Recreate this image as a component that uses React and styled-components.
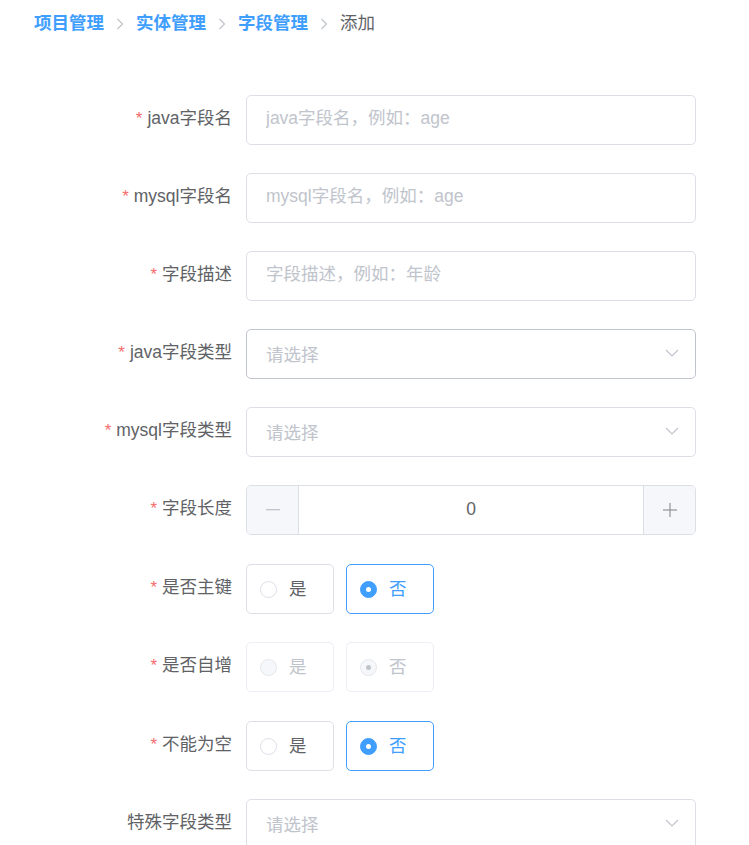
import React from "react";
import styled, { createGlobalStyle, css } from "styled-components";

const Global = createGlobalStyle`
  html, body { margin: 0; padding: 0; background: #fff; }
  body {
    font-family: "Helvetica Neue", Helvetica, "Liberation Sans", Arial, "Noto Sans CJK SC", sans-serif;
    -webkit-font-smoothing: antialiased;
  }
  * { box-sizing: border-box; }
`;

const Page = styled.div`
  width: 749px;
  min-height: 845px;
  overflow: hidden;
`;

const Breadcrumb = styled.nav`
  display: flex;
  align-items: center;
  padding: 14px 34px 0;
  height: 32px;
  font-size: 17.5px;
  line-height: 18px;
`;

const Crumb = styled.span`
  color: ${(p) => (p.$last ? "#606266" : "#409EFF")};
  font-weight: ${(p) => (p.$last ? 400 : 700)};
  white-space: nowrap;
`;

const Sep = styled.svg`
  width: 8px;
  height: 12px;
  margin: 1px 12px 0 12px;
  flex: none;
`;

const Form = styled.form`
  padding: 63px 0 0 96px;
`;

const Item = styled.div`
  display: flex;
  align-items: flex-start;
  margin-bottom: ${(p) => p.$mb || 28}px;
`;

const Label = styled.label`
  width: 150px;
  flex: none;
  padding-right: 14px;
  text-align: right;
  line-height: 47px;
  height: 50px;
  font-size: 17.5px;
  color: #606266;
  white-space: nowrap;
`;

const Star = styled.span`
  color: #F56C6C;
  margin-right: 5px;
  font-size: 17px;
`;

const Control = styled.div`
  width: 450px;
  height: 50px;
`;

const TextInput = styled.input`
  width: 100%;
  height: 50px;
  border: 1px solid #DCDFE6;
  border-radius: 5px;
  padding: 0 19px 3px;
  font: inherit;
  font-size: 17.5px;
  color: #606266;
  outline: none;
  background: #fff;
  &::placeholder { color: #C0C4CC; }
`;

const SelectBox = styled.div`
  display: flex;
  align-items: center;
  justify-content: space-between;
  height: 50px;
  border: 1px solid ${(p) => (p.$hover ? "#C0C4CC" : "#DCDFE6")};
  border-radius: 5px;
  padding: 0 16px 2px 19px;
  font-size: 17.5px;
  color: #C0C4CC;
  background: #fff;
`;

const Arrow = styled.svg`
  width: 14px;
  height: 8px;
  margin-top: 0px;
`;

const NumberBox = styled.div`
  display: flex;
  height: 50px;
  border: 1px solid #DCDFE6;
  border-radius: 5px;
  overflow: hidden;
  background: #fff;
`;

const StepBtn = styled.div`
  width: 52px;
  flex: none;
  display: flex;
  align-items: center;
  justify-content: center;
  background: #F5F7FA;
  ${(p) =>
    p.$side === "left"
      ? css`border-right: 1px solid #DCDFE6;`
      : css`border-left: 1px solid #DCDFE6;`}
`;

const NumValue = styled.div`
  flex: 1;
  display: flex;
  align-items: center;
  justify-content: center;
  padding-bottom: 2px;
  font-size: 17.5px;
  color: #606266;
`;

const RadioGroup = styled.div`
  display: flex;
  gap: 12px;
`;

const RadioBox = styled.div`
  width: 88px;
  height: 50px;
  display: flex;
  align-items: center;
  padding-left: 13px;
  border-radius: 5px;
  border: 1px solid
    ${(p) => (p.$disabled ? "#EBEEF5" : p.$checked ? "#409EFF" : "#DCDFE6")};
  background: #fff;
`;

const Circle = styled.span`
  width: 17px;
  height: 17px;
  border-radius: 50%;
  flex: none;
  display: flex;
  align-items: center;
  justify-content: center;
  border: 1px solid
    ${(p) => (p.$disabled ? "#E4E7ED" : p.$checked ? "#409EFF" : "#DCDFE6")};
  background: ${(p) =>
    p.$disabled ? "#F5F7FA" : p.$checked ? "#409EFF" : "#fff"};
  &::after {
    content: "";
    display: ${(p) => (p.$checked ? "block" : "none")};
    width: 5px;
    height: 5px;
    border-radius: 50%;
    background: ${(p) => (p.$disabled ? "#C0C4CC" : "#fff")};
  }
`;

const RadioText = styled.span`
  margin-left: 12px;
  margin-top: -3px;
  font-size: 17.5px;
  color: ${(p) =>
    p.$disabled ? "#C0C4CC" : p.$checked ? "#409EFF" : "#606266"};
`;

const Chevron = () => (
  <Sep viewBox="0 0 8 12">
    <path d="M1.5 1 L6.5 6 L1.5 11" fill="none" stroke="#C0C4CC" strokeWidth="1.2" />
  </Sep>
);

const Select = ({ hover }) => (
  <SelectBox $hover={hover}>
    <span>请选择</span>
    <Arrow viewBox="0 0 14 8">
      <path d="M1 1 L7 7 L13 1" fill="none" stroke="#C0C4CC" strokeWidth="1.1" />
    </Arrow>
  </SelectBox>
);

const Radio = ({ checked, disabled, children }) => (
  <RadioBox $checked={checked} $disabled={disabled}>
    <Circle $checked={checked} $disabled={disabled} />
    <RadioText $checked={checked} $disabled={disabled}>{children}</RadioText>
  </RadioBox>
);

const YesNo = ({ disabled }) => (
  <RadioGroup>
    <Radio disabled={disabled}>是</Radio>
    <Radio checked disabled={disabled}>否</Radio>
  </RadioGroup>
);

const Field = ({ label, required = true, mb, children }) => (
  <Item $mb={mb}>
    <Label>
      {required && <Star>*</Star>}
      {label}
    </Label>
    <Control>{children}</Control>
  </Item>
);

export default function App() {
  return (
    <Page>
      <Global />
      <Breadcrumb>
        <Crumb>项目管理</Crumb>
        <Chevron />
        <Crumb>实体管理</Crumb>
        <Chevron />
        <Crumb>字段管理</Crumb>
        <Chevron />
        <Crumb $last>添加</Crumb>
      </Breadcrumb>
      <Form onSubmit={(e) => e.preventDefault()}>
        <Field label="java字段名">
          <TextInput placeholder="java字段名，例如：age" />
        </Field>
        <Field label="mysql字段名">
          <TextInput placeholder="mysql字段名，例如：age" />
        </Field>
        <Field label="字段描述">
          <TextInput placeholder="字段描述，例如：年龄" />
        </Field>
        <Field label="java字段类型">
          <Select hover />
        </Field>
        <Field label="mysql字段类型">
          <Select />
        </Field>
        <Field label="字段长度" mb={29}>
          <NumberBox>
            <StepBtn $side="left">
              <svg width="14" height="2" viewBox="0 0 14 2">
                <rect x="0" y="0" width="14" height="1.3" fill="#C0C4CC" />
              </svg>
            </StepBtn>
            <NumValue>0</NumValue>
            <StepBtn $side="right">
              <svg width="14" height="14" viewBox="0 0 14 14">
                <rect x="0" y="6.4" width="14" height="1.2" fill="#909399" />
                <rect x="6.4" y="0" width="1.2" height="14" fill="#909399" />
              </svg>
            </StepBtn>
          </NumberBox>
        </Field>
        <Field label="是否主键" mb={28}>
          <YesNo />
        </Field>
        <Field label="是否自增" mb={29}>
          <YesNo disabled />
        </Field>
        <Field label="不能为空" mb={28}>
          <YesNo />
        </Field>
        <Field label="特殊字段类型" required={false}>
          <Select />
        </Field>
      </Form>
    </Page>
  );
}
